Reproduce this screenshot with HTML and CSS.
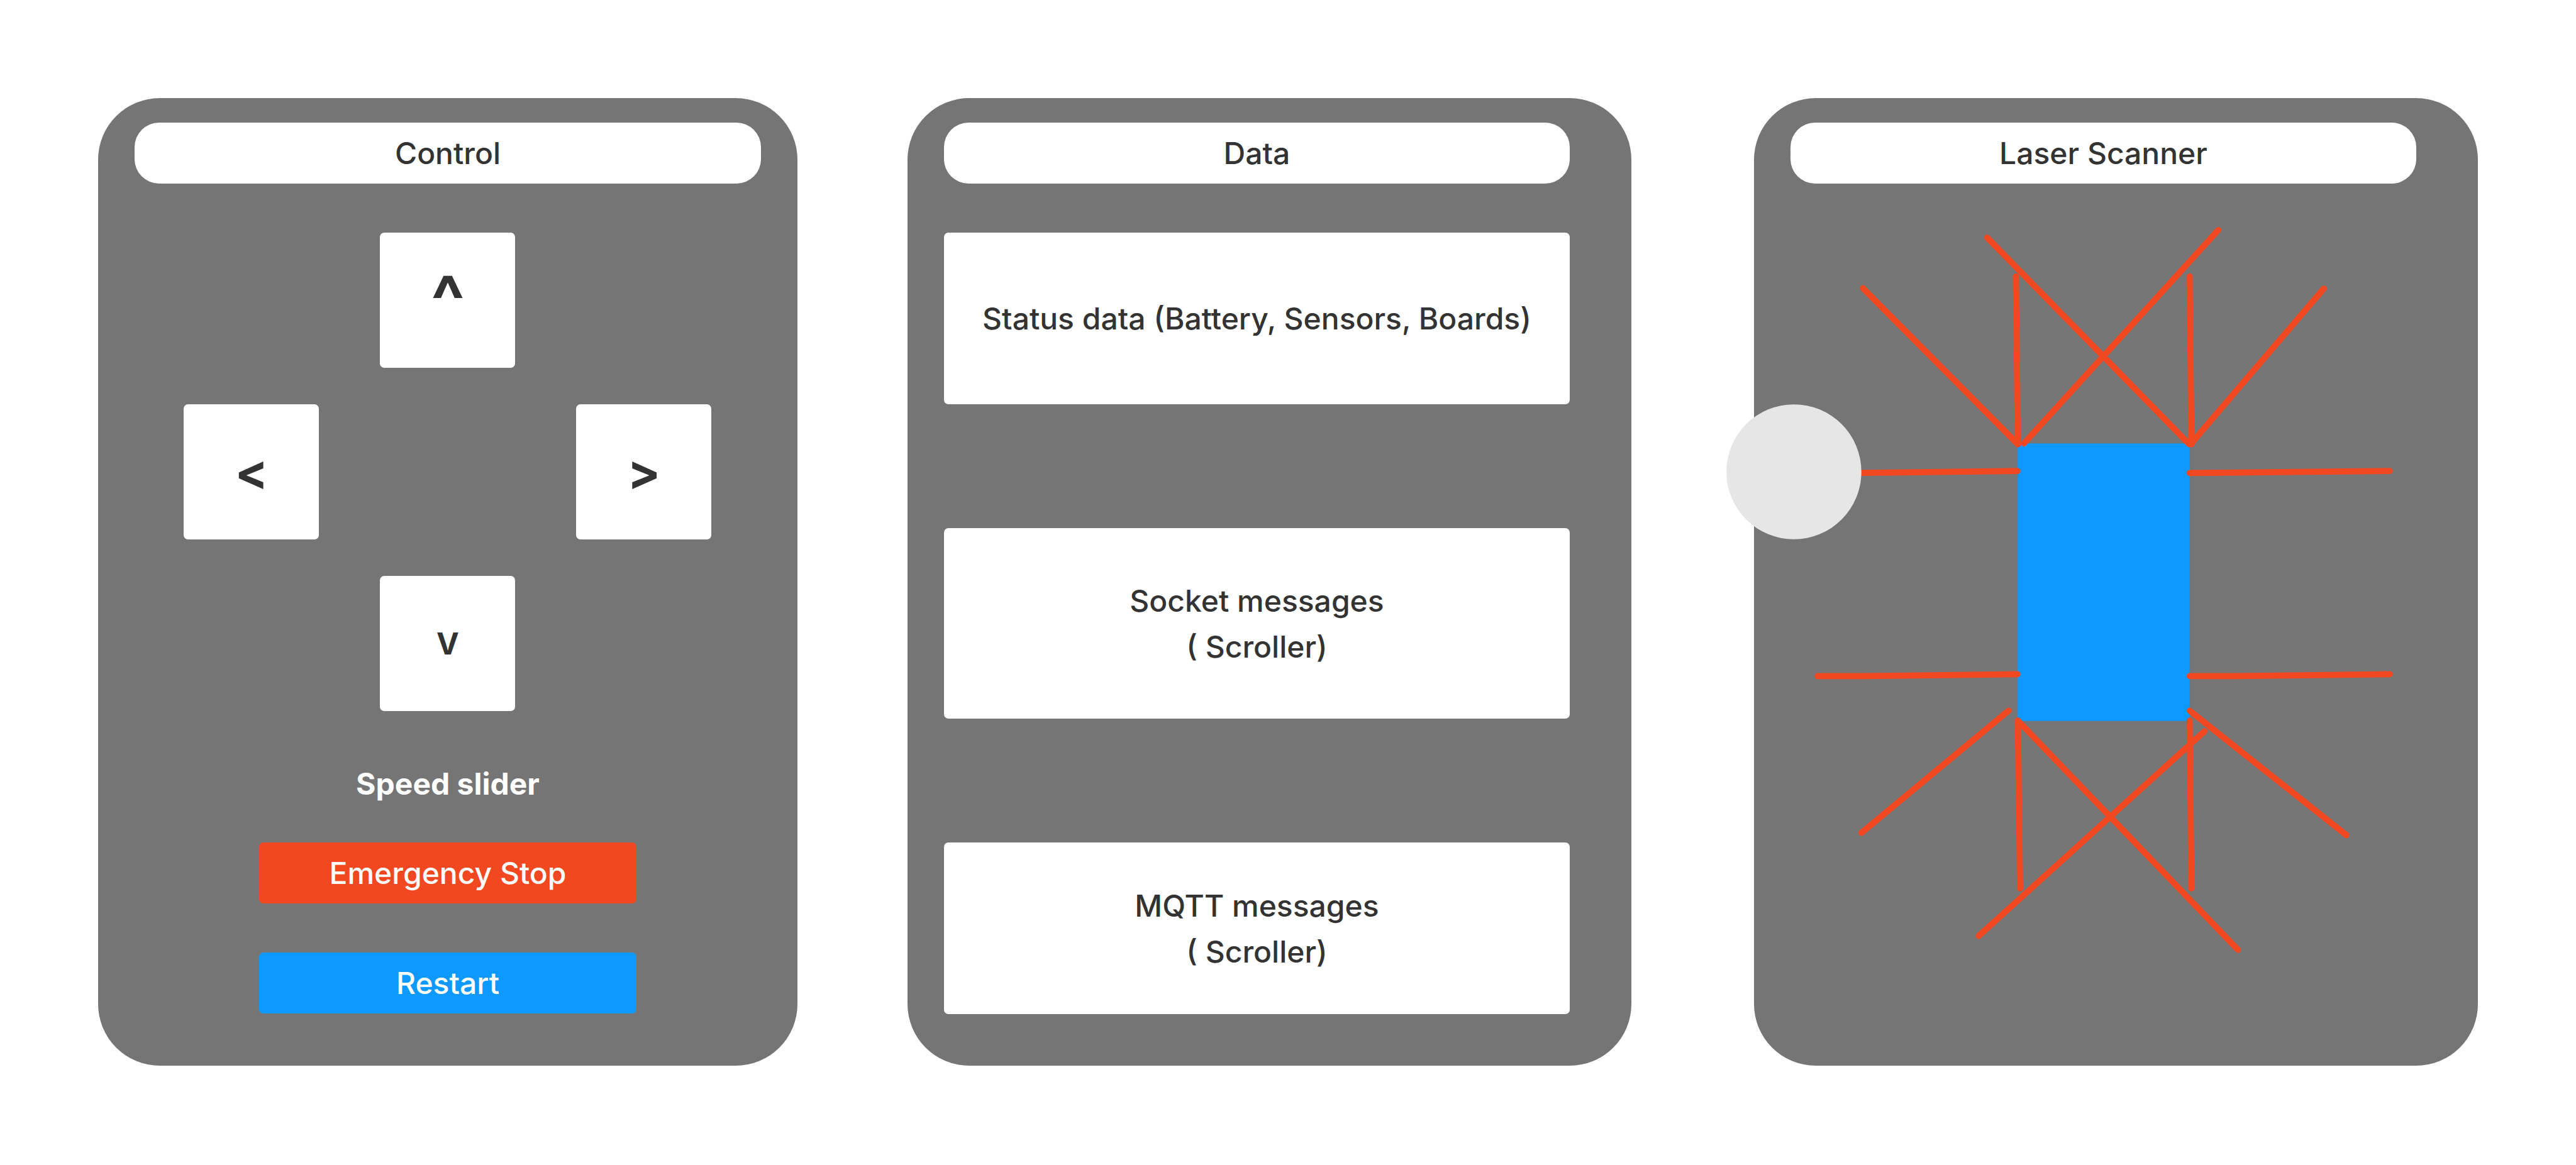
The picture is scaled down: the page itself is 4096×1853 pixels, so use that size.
FILE: index.html
```html
<!DOCTYPE html>
<html lang="en">
<head>
<meta charset="utf-8">
<title>Robot dashboard</title>
<link rel="stylesheet" href="styles.css">
</head>
<body>
<main class="board">
  <section class="panel control">
    <h2 class="title">Control</h2>
    <div class="dpad">
      <button class="key up" type="button">^</button>
      <button class="key left" type="button">&lt;</button>
      <button class="key right" type="button">&gt;</button>
      <button class="key down" type="button">V</button>
    </div>
    <p class="speed">Speed slider</p>
    <div class="actions">
      <button class="action stop" type="button">Emergency Stop</button>
      <button class="action restart" type="button">Restart</button>
    </div>
  </section>

  <section class="panel data">
    <h2 class="title">Data</h2>
    <div class="feeds">
      <div class="feed">Status data (Battery, Sensors, Boards)</div>
      <div class="feed tall">Socket messages<br>( Scroller)</div>
      <div class="feed">MQTT messages<br>( Scroller)</div>
    </div>
  </section>

  <section class="panel laser">
    <h2 class="title">Laser Scanner</h2>
    <svg class="scan" viewBox="0 0 1888 2300" role="img" aria-label="Laser beams around the robot">
      <rect class="robot" x="688" y="678" width="448" height="724"/>
      <g class="beams">
        <path d="M284 273 688 680"/>
        <path d="M683 242 688 680"/>
        <path d="M1211 121 704 678"/>
        <path d="M608 141 1135 680"/>
        <path d="M1136 242 1141 680"/>
        <path d="M1486 274 1141 677"/>
        <path d="M166 756 687 750"/>
        <path d="M1136 755 1658 750"/>
        <path d="M166 1285 287 1285 687 1280"/>
        <path d="M1136 1285 1257 1285 1658 1280"/>
        <path d="M664 1375 280 1694"/>
        <path d="M688 1401 694 1839"/>
        <path d="M688 1401 1262 1999"/>
        <path d="M1136 1375 1545 1700"/>
        <path d="M1136 1401 1141 1839"/>
        <path d="M1175 1429 586 1963"/>
      </g>
      <circle class="knob" cx="104" cy="752" r="176"/>
    </svg>
  </section>
</main>
</body>
</html>
```
FILE: styles.css
```css
* {
  box-sizing: border-box;
}

body {
  margin: 0;
  background: #fff;
  color: #333;
  font: 500 48px/73px Inter, "Liberation Sans", sans-serif;
}

.board {
  display: grid;
  grid-template-columns: 1824fr 175px 1888fr 195px 1888fr;
  padding: 156px;
}

.panel {
  display: flex;
  flex-direction: column;
  padding: 39px 98px 82px 58px;
  border-radius: 98px;
  background: #757575;
}

.control {
  grid-column: 1;
  padding-right: 58px;
}

.data {
  grid-column: 3;
}

.laser {
  grid-column: 5;
  padding-bottom: 0;
}

.title {
  margin: 0;
  padding: 12px;
  border-radius: 39px;
  background: #fff;
  font: inherit;
  text-align: center;
}

button {
  padding: 0;
  border: 0;
  border-radius: 7px;
  color: inherit;
  font: inherit;
}

.dpad {
  display: grid;
  grid-template-columns: repeat(3, 215px);
  grid-auto-rows: 215px;
  grid-template-areas: ". up ." "left . right" ". down .";
  justify-content: center;
  gap: 58px 97px;
  margin-top: 78px;
}

.key {
  background: #fff;
  font-size: 78px;
  font-weight: 700;
}

.up { grid-area: up; font-size: 112px; }
.left { grid-area: left; }
.right { grid-area: right; }
.down { grid-area: down; font-size: 48px; }

.speed {
  margin: 79px 0 57px;
  color: #fff;
  font-weight: 700;
  text-align: center;
}

.actions {
  display: grid;
  grid-template-columns: 600px;
  justify-content: center;
  gap: 78px;
}

.action {
  padding: 12px;
  color: #fff;
}

.stop { background: #f24822; }
.restart { background: #0d99ff; }

.feeds {
  display: grid;
  gap: 197px;
  margin-top: 78px;
}

.feed {
  display: grid;
  place-content: center;
  min-height: 273px;
  border-radius: 7px;
  background: #fff;
  text-align: center;
}

.tall {
  min-height: 303px;
}

.scan {
  display: block;
  margin: 0 -98px 0 -58px;
  overflow: visible;
}

.robot { fill: #0d99ff; }
.knob { fill: #e6e6e6; }

.beams {
  fill: none;
  stroke: #f24822;
  stroke-width: 16;
  stroke-linecap: round;
  stroke-linejoin: round;
}
```
